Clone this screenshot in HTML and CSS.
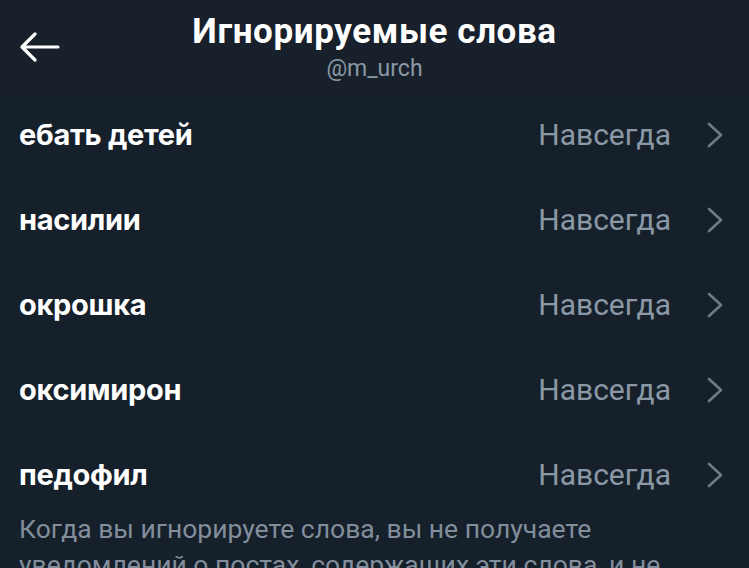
FILE: index.html
```html
<!DOCTYPE html>
<html lang="ru">
<head>
<meta charset="utf-8">
<link rel="stylesheet" href="styles.css">
</head>
<body>
<div class="screen">
  <header class="header">
    <div class="back">
      <svg width="42" height="30" viewBox="0 0 42 30"><path d="M40 15H4M17 2L4 15l13 13" fill="none" stroke="#fff" stroke-width="3.2" stroke-linecap="round" stroke-linejoin="round"/></svg>
    </div>
    <div class="titles">
      <div class="title">Игнорируемые слова</div>
      <div class="handle">@m_urch</div>
    </div>
  </header>
  <ul class="list">
    <li class="row"><span class="word">ебать детей</span><span class="dur">Навсегда</span><svg class="chev" width="16" height="26" viewBox="0 0 16 26"><path d="M2 2l12 11L2 24" fill="none" stroke="#6e7a87" stroke-width="2.6" stroke-linecap="round" stroke-linejoin="round"/></svg></li>
    <li class="row"><span class="word">насилии</span><span class="dur">Навсегда</span><svg class="chev" width="16" height="26" viewBox="0 0 16 26"><path d="M2 2l12 11L2 24" fill="none" stroke="#6e7a87" stroke-width="2.6" stroke-linecap="round" stroke-linejoin="round"/></svg></li>
    <li class="row"><span class="word">окрошка</span><span class="dur">Навсегда</span><svg class="chev" width="16" height="26" viewBox="0 0 16 26"><path d="M2 2l12 11L2 24" fill="none" stroke="#6e7a87" stroke-width="2.6" stroke-linecap="round" stroke-linejoin="round"/></svg></li>
    <li class="row"><span class="word">оксимирон</span><span class="dur">Навсегда</span><svg class="chev" width="16" height="26" viewBox="0 0 16 26"><path d="M2 2l12 11L2 24" fill="none" stroke="#6e7a87" stroke-width="2.6" stroke-linecap="round" stroke-linejoin="round"/></svg></li>
    <li class="row"><span class="word">педофил</span><span class="dur">Навсегда</span><svg class="chev" width="16" height="26" viewBox="0 0 16 26"><path d="M2 2l12 11L2 24" fill="none" stroke="#6e7a87" stroke-width="2.6" stroke-linecap="round" stroke-linejoin="round"/></svg></li>
  </ul>
  <p class="note">Когда вы игнорируете слова, вы не получаете уведомлений о постах, содержащих эти слова, и не видите их в своей ленте.</p>
</div>
</body>
</html>
```

FILE: styles.css
```css
* { box-sizing: border-box; }
html, body { margin: 0; padding: 0; background: #16202b; }
.screen {
  width: 749px;
  height: 568px;
  overflow: hidden;
  background: #16202b;
  color: #fff;
  font-family: "Inter", "Roboto", sans-serif;
}
.header {
  position: relative;
  height: 92px;
  display: flex;
  justify-content: center;
  background: #17202b;
}
.back {
  position: absolute;
  left: 18px;
  top: 32px;
  display: flex;
}
.titles {
  display: flex;
  flex-direction: column;
  align-items: center;
  padding-top: 12px;
}
.title {
  font-family: "Roboto", sans-serif;
  font-weight: 700;
  font-size: 35px;
  line-height: 40px;
  letter-spacing: 0.6px;
}
.handle {
  font-family: "Roboto", sans-serif;
  font-weight: 400;
  font-size: 23px;
  line-height: 30px;
  margin-top: 2px;
  color: #8b98a5;
}
.list {
  list-style: none;
  margin: 0;
  padding: 0;
}
.row {
  height: 85px;
  display: flex;
  align-items: center;
  padding: 0 26px 0 19px;
}
.word {
  flex: 1;
  font-family: "Inter", sans-serif;
  font-weight: 700;
  font-size: 29px;
  letter-spacing: -0.3px;
}
.dur {
  font-family: "Roboto", sans-serif;
  font-size: 30px;
  color: #8b98a5;
  margin-right: 36px;
}
.chev { display: block; }
.note {
  margin: -6px 0 0;
  padding: 0 19px;
  font-family: "Roboto", sans-serif;
  font-size: 26.5px;
  line-height: 36px;
  color: #828e9b;
}
```
